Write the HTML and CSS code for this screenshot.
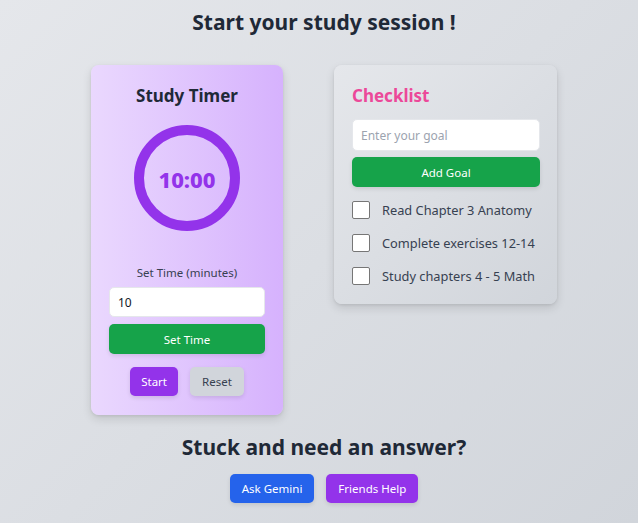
FILE: index.html
```html
<!DOCTYPE html>
<html>
<head>
<meta charset="utf-8">
<link rel="stylesheet" href="styles.css">
</head>
<body>
<main class="page">
  <h1 class="title">Start your study session !</h1>
  <div class="cards">
    <section class="card timer">
      <h2 class="timer-title">Study Timer</h2>
      <div class="ring"><span class="time">10:00</span></div>
      <label class="set-label">Set Time (minutes)</label>
      <input class="field" type="text" value="10">
      <button class="btn wide green">Set Time</button>
      <div class="controls">
        <button class="btn small purple">Start</button>
        <button class="btn small gray">Reset</button>
      </div>
    </section>
    <section class="card checklist">
      <h2 class="check-title">Checklist</h2>
      <input class="field goal" type="text" placeholder="Enter your goal">
      <button class="btn wide green add">Add Goal</button>
      <ul class="items">
        <li class="item"><span class="box"></span>Read Chapter 3 Anatomy</li>
        <li class="item"><span class="box"></span>Complete exercises 12-14</li>
        <li class="item"><span class="box"></span>Study chapters 4 - 5 Math</li>
      </ul>
    </section>
  </div>
  <h2 class="help-title">Stuck and need an answer?</h2>
  <div class="help">
    <button class="btn help-btn blue">Ask Gemini</button>
    <button class="btn help-btn purple">Friends Help</button>
  </div>
</main>
</body>
</html>
```
FILE: styles.css
```css
* { box-sizing: border-box; }
html, body { margin: 0; height: 100%; }
body {
  font-family: "Noto Sans", "Open Sans", sans-serif;
  background: linear-gradient(135deg, #e5e7eb 0%, #d1d5db 100%);
  color: #1f2937;
  overflow: hidden;
}
.page {
  display: flex;
  flex-direction: column;
  align-items: center;
  padding-left: 10px;
}
.title {
  margin: 8px 0 0;
  font-size: 21px;
  font-weight: 700;
  line-height: 28px;
}
.cards {
  display: flex;
  gap: 51px;
  margin-top: 29px;
  align-items: flex-start;
}
.card {
  border-radius: 8px;
  box-shadow: 0 4px 10px rgba(0,0,0,0.12), 0 1px 3px rgba(0,0,0,0.08);
}
.timer {
  width: 192px;
  height: 350px;
  background: linear-gradient(90deg, #ead8fe 0%, #d6b2fd 100%);
  display: flex;
  flex-direction: column;
  align-items: center;
  padding: 19px 18px 0;
}
.timer-title {
  margin: 0;
  font-size: 17px;
  line-height: 24px;
  font-weight: 700;
}
.ring {
  margin-top: 17px;
  width: 106px;
  height: 106px;
  border: 10px solid #9333ea;
  border-radius: 50%;
  display: flex;
  align-items: center;
  justify-content: center;
  padding-top: 1px;
}
.time {
  font-size: 22px;
  font-weight: 800;
  color: #9333ea;
}
.set-label {
  margin-top: 34px;
  font-size: 11.5px;
  line-height: 16px;
  color: #374151;
}
.field {
  display: block;
  width: 156px;
  height: 30px;
  margin-top: 6px;
  border: 1px solid #e5e7eb;
  border-radius: 5px;
  background: #fff;
  padding: 0 8px;
  font-family: inherit;
  font-size: 12px;
  color: #111827;
  outline: none;
}
.btn {
  border: none;
  font-family: inherit;
  font-size: 11.5px;
  color: #fff;
  border-radius: 5px;
  box-shadow: 0 2px 4px rgba(0,0,0,0.1);
  padding: 0;
}
.wide { width: 156px; height: 30px; margin-top: 7px; }
.green { background: #16a34a; }
.purple { background: #9333ea; }
.blue { background: #2563eb; }
.gray { background: #d1d5db; color: #374151; }
.controls {
  display: flex;
  gap: 12px;
  margin-top: 13px;
}
.small { height: 29px; padding: 0 11px; }
.gray.small { padding: 0 12px; }
.checklist {
  width: 223px;
  height: 239px;
  background: linear-gradient(135deg, #e5e7eb 0%, #d1d5db 100%);
  padding: 19px 18px 0;
}
.check-title {
  margin: 0;
  font-size: 17px;
  line-height: 24px;
  color: #ec4899;
  font-weight: 700;
}
.goal {
  width: 188px;
  height: 32px;
  margin-top: 11px;
}
.goal::placeholder { color: #9ca3af; }
.add { width: 188px; margin-top: 6px; }
.items {
  list-style: none;
  margin: 14px 0 0;
  padding: 0;
  display: flex;
  flex-direction: column;
  gap: 15px;
}
.item {
  display: flex;
  align-items: center;
  height: 18px;
  font-size: 12.8px;
  color: #374151;
}
.box {
  width: 18px;
  height: 18px;
  background: #fff;
  border: 1px solid #767676;
  border-radius: 2px;
  margin-right: 12px;
}
.help-title {
  margin: 18px 0 0;
  font-size: 21px;
  line-height: 28px;
  font-weight: 700;
}
.help {
  display: flex;
  gap: 12px;
  margin-top: 13px;
}
.help-btn { height: 29px; padding: 0 12px; }
```
